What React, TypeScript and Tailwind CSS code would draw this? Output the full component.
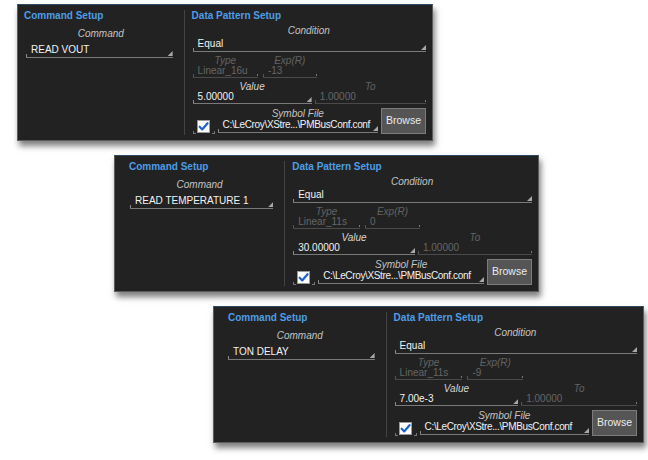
import clsx from 'clsx'
import type { ReactNode } from 'react'

type Setup = {
  command: string
  type: string
  exp: string
  value: string
  to: string
  width: string
  offset: string
  titlePad: string
  fieldPad: string
}

const setups: Setup[] = [
  {
    command: 'READ VOUT', type: 'Linear_16u', exp: '-13', value: '5.00000', to: '1.00000',
    width: 'w-[416px]', offset: 'ml-[17px]', titlePad: 'px-[6px]', fieldPad: 'ml-[8px]',
  },
  {
    command: 'READ TEMPERATURE 1', type: 'Linear_11s', exp: '0', value: '30.00000', to: '1.00000',
    width: 'w-[425px]', offset: 'ml-[114px]', titlePad: 'px-[14px]', fieldPad: 'ml-[15px]',
  },
  {
    command: 'TON DELAY', type: 'Linear_11s', exp: '-9', value: '7.00e-3', to: '1.00000',
    width: 'w-[431px]', offset: 'ml-[213px]', titlePad: 'px-[14px]', fieldPad: 'ml-[14px]',
  },
]

/** Underlined edit box: tick on the left, resize grip (or dot when disabled) on the right. */
function Field({ children, dim, className }: { children?: ReactNode; dim?: boolean; className?: string }) {
  return (
    <div
      className={clsx(
        'relative flex items-end border-b pl-[5px] text-[10px] leading-[12px] whitespace-nowrap',
        dim ? 'border-[#4a4a4a] text-[#666]' : 'border-[#7a7a7a] text-[#f2f2f2]',
        className,
      )}
    >
      <span className={clsx('absolute bottom-0 left-0 h-[3px] w-px', dim ? 'bg-[#555]' : 'bg-[#8a8a8a]')} />
      {dim ? (
        <span className="absolute right-0 bottom-[1px] h-[2px] w-px bg-[#777]" />
      ) : (
        <span className="absolute right-0 bottom-[1px] h-[5px] w-[5px] bg-[#a8a8a8] [clip-path:polygon(100%_0,100%_100%,0_100%)]" />
      )}
      {children}
    </div>
  )
}

function Label({ children, dim, className }: { children: ReactNode; dim?: boolean; className?: string }) {
  return (
    <div className={clsx('text-center text-[10px] italic', dim ? 'text-[#626262]' : 'text-[#c4c4c4]', className)}>
      {children}
    </div>
  )
}

function Check() {
  return (
    <div className="flex h-[13px] w-[13px] items-center justify-center border border-[#9a9a9a] bg-white">
      <svg viewBox="0 0 12 12" className="h-[11px] w-[11px]">
        <path d="M1.8 6.3 L4.6 9.2 L10.4 2.4" fill="none" stroke="#1d62c9" strokeWidth="2.4" strokeLinecap="round" strokeLinejoin="round" />
      </svg>
    </div>
  )
}

function Panel({ s }: { s: Setup }) {
  return (
    <div
      className={clsx(
        'flex h-[137px] border border-[#5c5c5c] border-t-[#2d4a66] bg-[#222] shadow-[2px_5px_6px_rgba(0,0,0,0.5)]',
        s.width,
        s.offset,
      )}
    >
      {/* Command Setup */}
      <div className="flex w-[40%] flex-col pt-[5px]">
        <div className={clsx('h-[12px] text-[10px] leading-[12px] font-bold text-[#4d9de6]', s.titlePad)}>
          Command Setup
        </div>
        <Label className="mt-[6px] h-[12px] leading-[12px]">Command</Label>
        <Field className={clsx('mt-[4px] mr-[11px] h-[14px] pb-px', s.fieldPad)}>{s.command}</Field>
      </div>

      <div className="my-[5px] w-px bg-[#444]" />

      {/* Data Pattern Setup */}
      <div className="flex flex-1 flex-col pt-[5px] pr-[6px] pl-[7px]">
        <div className="h-[12px] text-[10px] leading-[12px] font-bold text-[#4d9de6]">Data Pattern Setup</div>
        <Label className="mt-[3px] h-[12px] leading-[12px]">Condition</Label>
        <Field className="ml-px h-[15px] pb-px">Equal</Field>

        <div className="mt-[4px] ml-px flex gap-[5px]">
          <div className="flex w-[28%] flex-col">
            <Label dim className="h-[10px] leading-[10px]">Type</Label>
            <Field dim className="h-[12px] leading-[10px]">{s.type}</Field>
          </div>
          <div className="flex w-[23%] flex-col">
            <Label dim className="h-[10px] leading-[10px]">Exp(R)</Label>
            <Field dim className="h-[12px] leading-[10px]">{s.exp}</Field>
          </div>
        </div>

        <div className="mt-[4px] ml-px flex gap-[3px]">
          <div className="flex w-[51%] flex-col">
            <Label className="h-[10px] leading-[10px] text-[#d6d6d6]">Value</Label>
            <Field className="h-[12px]">{s.value}</Field>
          </div>
          <div className="flex flex-1 flex-col">
            <Label dim className="h-[10px] leading-[10px]">To</Label>
            <Field dim className="h-[12px] pl-[3px]">{s.to}</Field>
          </div>
        </div>

        <div className="mt-[4px] ml-px flex h-[26px] items-stretch gap-[3px]">
          <div className="relative flex w-[22px] items-end pb-[1px] pl-[4px]">
            <span className="absolute bottom-0 left-0 h-[3px] w-[3px] border-b border-l border-[#777]" />
            <span className="absolute right-0 bottom-0 h-[3px] w-[3px] border-r border-b border-[#777]" />
            <Check />
          </div>
          <div className="flex flex-1 flex-col">
            <Label className="h-[11px] leading-[11px]">Symbol File</Label>
            <Field className="h-[14px] pb-px pl-[4px] tracking-[-0.35px]">C:\LeCroy\XStre...\PMBusConf.conf</Field>
          </div>
          <button className="w-[45px] border border-[#7c7c7c] bg-[#555] text-[10.5px] text-[#ececec]">Browse</button>
        </div>
      </div>
    </div>
  )
}

export default function App() {
  return (
    <div className="flex h-[460px] w-[648px] flex-col gap-[14px] bg-white pt-[4px] font-['Liberation_Sans',Arial,sans-serif]">
      {setups.map((s) => (
        <Panel key={s.command} s={s} />
      ))}
    </div>
  )
}
